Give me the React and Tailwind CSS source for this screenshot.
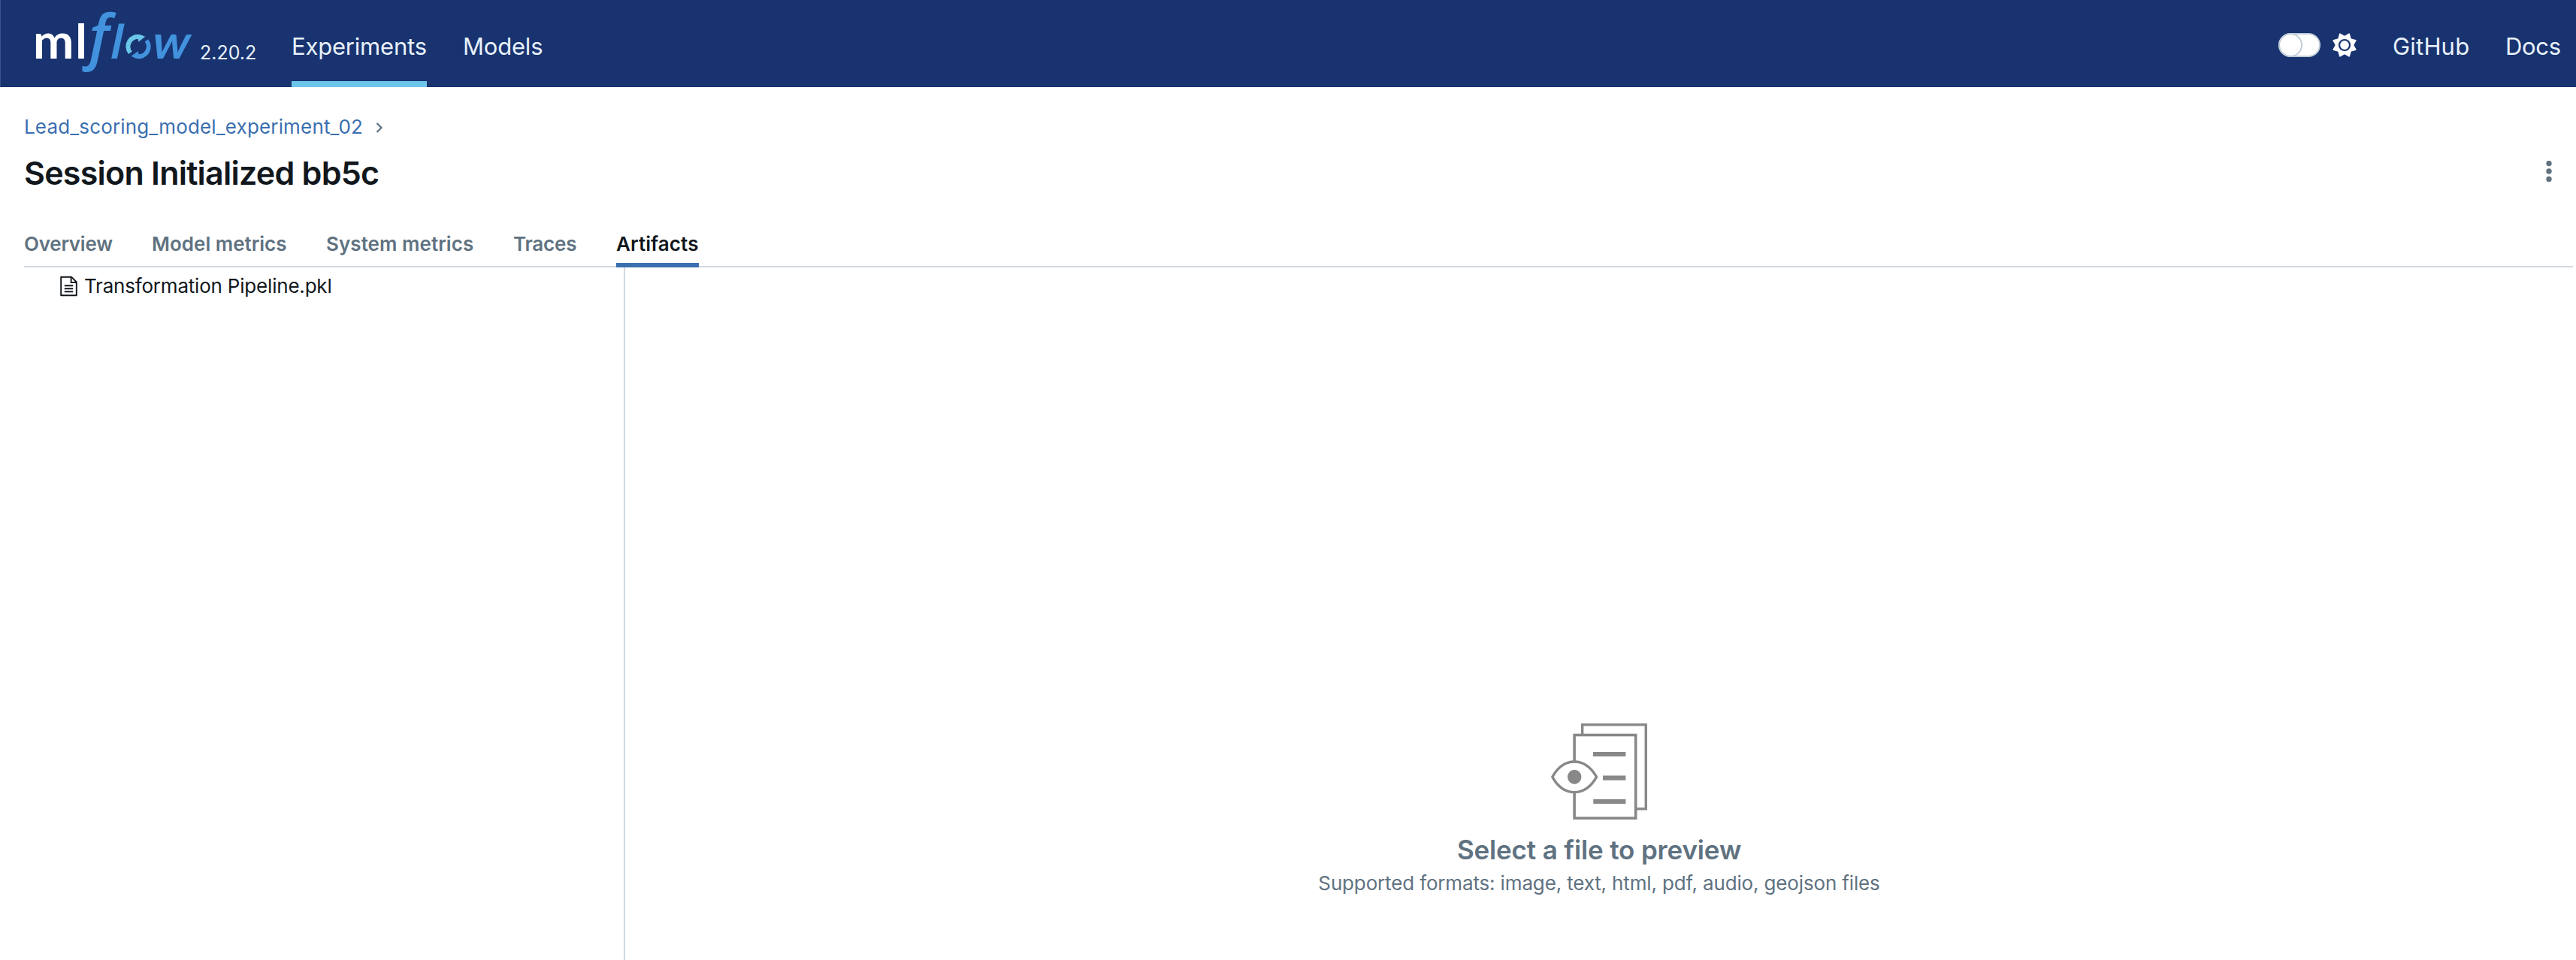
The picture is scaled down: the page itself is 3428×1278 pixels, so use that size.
import React from 'react';

function Logo() {
  return (
    <svg width="264" height="116" viewBox="0 0 264 116" className="block shrink-0 overflow-visible" role="img" aria-label="mlflow">
      <g fontFamily="Lato, sans-serif" fontWeight="700" fontSize="62.5">
        <text transform="translate(44 78.3) scale(1.04 1)" fill="#ffffff">m</text>
        <text x="100.2" y="78.3" fill="#ffffff">l</text>
        <text transform="translate(144.2 78.3) skewX(-12)" fill="#4292de">l</text>
        <text transform="translate(199 78.3) skewX(-12)" fill="#4292de">w</text>
      </g>
      <text x="118.2" y="77" fill="#4292de" fontFamily="'Open Sans', sans-serif" fontStyle="italic" fontWeight="600" fontSize="79">f</text>
      <path d="M171 72A16 16 0 0 1 187.2 46.3L193.2 48.8L184.4 55.7L183.6 51.7A10.5 10.5 0 0 0 175.7 68.6Z" fill="#6bc6ea" />
      <path d="M197.2 52.2A16 16 0 0 1 181 77.8L174.4 74.8L183.6 68.2L184.8 72.3A10.5 10.5 0 0 0 192.6 55.4Z" fill="#4292de" />
    </svg>
  );
}

function SunIcon() {
  return (
    <svg width="32" height="32" viewBox="0 0 32 32" className="block shrink-0">
      <path
        fill="#ffffff"
        stroke="#ffffff"
        strokeWidth="1"
        strokeLinejoin="round"
        d="M16 4.2L22.3 0.7L24.3 7.7L31.3 9.7L27.8 16L31.3 22.3L24.3 24.3L22.3 31.3L16 27.8L9.7 31.3L7.7 24.3L0.7 22.3L4.2 16L0.7 9.7L7.7 7.7L9.7 0.7Z"
      />
      <circle cx="16" cy="16" r="7" fill="#ffffff" stroke="#18336f" strokeWidth="2.2" />
    </svg>
  );
}

function FileIcon() {
  return (
    <svg width="24" height="28" viewBox="0 0 24 28" className="block shrink-0" fill="none" stroke="#11171c" strokeWidth="1.9">
      <path d="M1.2 1.7H15L21.8 8.5V26.3H1.2Z" strokeLinejoin="round" />
      <path d="M14.6 1.7V9H21.8" />
      <path d="M5.8 13.2H17.2M5.8 17.2H17.2M5.8 21.2H17.2" />
    </svg>
  );
}

function PreviewIllustration() {
  return (
    <svg width="128" height="128" viewBox="0 0 128 128" className="block" fill="#ffffff" stroke="#888888">
      <rect x="41.7" y="1.8" width="84.6" height="112" strokeWidth="3.4" />
      <rect x="31.1" y="15.5" width="81.6" height="110.7" strokeWidth="3.6" />
      <path d="M1.8 71.3C17 44.2 45 44.2 60.6 71.3C45 98.4 17 98.4 1.8 71.3Z" strokeWidth="3.4" strokeLinejoin="round" />
      <ellipse cx="31.2" cy="71.3" rx="9.2" ry="9.6" fill="#888888" stroke="none" />
      <path d="M56 41H99.4M69 72.6H99.4M56.3 104H99.4" strokeWidth="6.2" />
    </svg>
  );
}

function Header() {
  return (
    <header className="flex h-[116px] shrink-0 border-l border-[#3a528a] bg-[#18336f] text-[31px] leading-[124px] text-[#e8f1fb]">
      <div className="-ml-px">
        <Logo />
      </div>
      <span className="ml-[2px] w-[73px] text-[25px] leading-[140px] whitespace-nowrap">2.20.2</span>
      <nav className="ml-[49px] flex gap-12">
        <a className="h-[116px] w-[180px] border-b-8 border-[#6cc5ea] tracking-[-0.2px]">Experiments</a>
        <a className="tracking-[-0.2px]">Models</a>
      </nav>
      <div className="ml-auto flex">
        <div className="mt-11 mr-4 h-8 w-14 rounded-full border-2 border-[#c0cdd8] bg-white">
          <div className="-mt-[2px] -ml-[2px] size-8 rounded-full border-2 border-[#c0cdd8]" />
        </div>
        <div className="mt-11 mr-12">
          <SunIcon />
        </div>
        <a className="w-[150px] tracking-[0.2px]">GitHub</a>
        <a className="w-[94px] tracking-[-0.3px]">Docs</a>
      </div>
    </header>
  );
}

const tabs = [
  { label: 'Overview', style: 'w-[118px] tracking-[-0.25px]' },
  { label: 'Model metrics', style: 'w-[180px]' },
  { label: 'System metrics', style: 'w-[197px] tracking-[0.05px]' },
  { label: 'Traces', style: 'w-[85px] tracking-[-0.2px]' },
  { label: 'Artifacts', style: 'w-[110px] border-b-6 border-[#3a6fb0] tracking-[0.1px] text-[#11171c]' },
];

export default function App() {
  return (
    <div className="flex h-[1278px] w-full flex-col overflow-hidden bg-white font-['Inter',sans-serif] text-[26px] leading-10 text-[#11171c]">
      <Header />
      <main className="flex min-h-0 grow flex-col pr-1 pl-8">
        <div className="mt-[33px] flex items-center">
          <a className="tracking-[0.16px] text-[#3a6fb0]">Lead_scoring_model_experiment_02</a>
          <svg width="10" height="14" viewBox="0 0 10 14" className="mt-[2px] ml-[17px]" fill="none" stroke="#5f7281" strokeWidth="2.2">
            <path d="M1.5 1L7.5 7L1.5 13" />
          </svg>
        </div>
        <div className="mt-[13px] flex items-center justify-between">
          <h1 className="text-[43px] leading-[56px] font-semibold tracking-[-0.77px]">Session Initialized bb5c</h1>
          <svg width="8" height="28" viewBox="0 0 8 28" className="mr-7 -mt-[4px]" fill="#5f7281">
            <circle cx="4" cy="3.5" r="3.7" />
            <circle cx="4" cy="14" r="3.7" />
            <circle cx="4" cy="24.5" r="3.7" />
          </svg>
        </div>
        <div className="mt-[47px] flex h-[51px] shrink-0 gap-[52px] border-b-2 border-[#d1d9e1] font-semibold text-[#5f7281]">
          {tabs.map((tab) => (
            <a key={tab.label} className={`h-[51px] whitespace-nowrap ${tab.style}`}>
              {tab.label}
            </a>
          ))}
        </div>
        <div className="flex min-h-0 grow">
          <aside className="w-[800px] shrink-0 border-r-2 border-[#d1d9e1] pt-[5px]">
            <div className="flex items-center gap-2 pl-12">
              <FileIcon />
              <span className="tracking-[-0.2px]">Transformation Pipeline.pkl</span>
            </div>
          </aside>
          <section className="flex grow flex-col items-center pt-[607px] text-[#5f7281]">
            <PreviewIllustration />
            <h2 className="mt-[18px] text-[35px] leading-[44px] font-semibold tracking-[-0.15px]">Select a file to preview</h2>
            <p className="mt-[3px] tracking-[-0.15px]">Supported formats: image, text, html, pdf, audio, geojson files</p>
          </section>
        </div>
      </main>
    </div>
  );
}
